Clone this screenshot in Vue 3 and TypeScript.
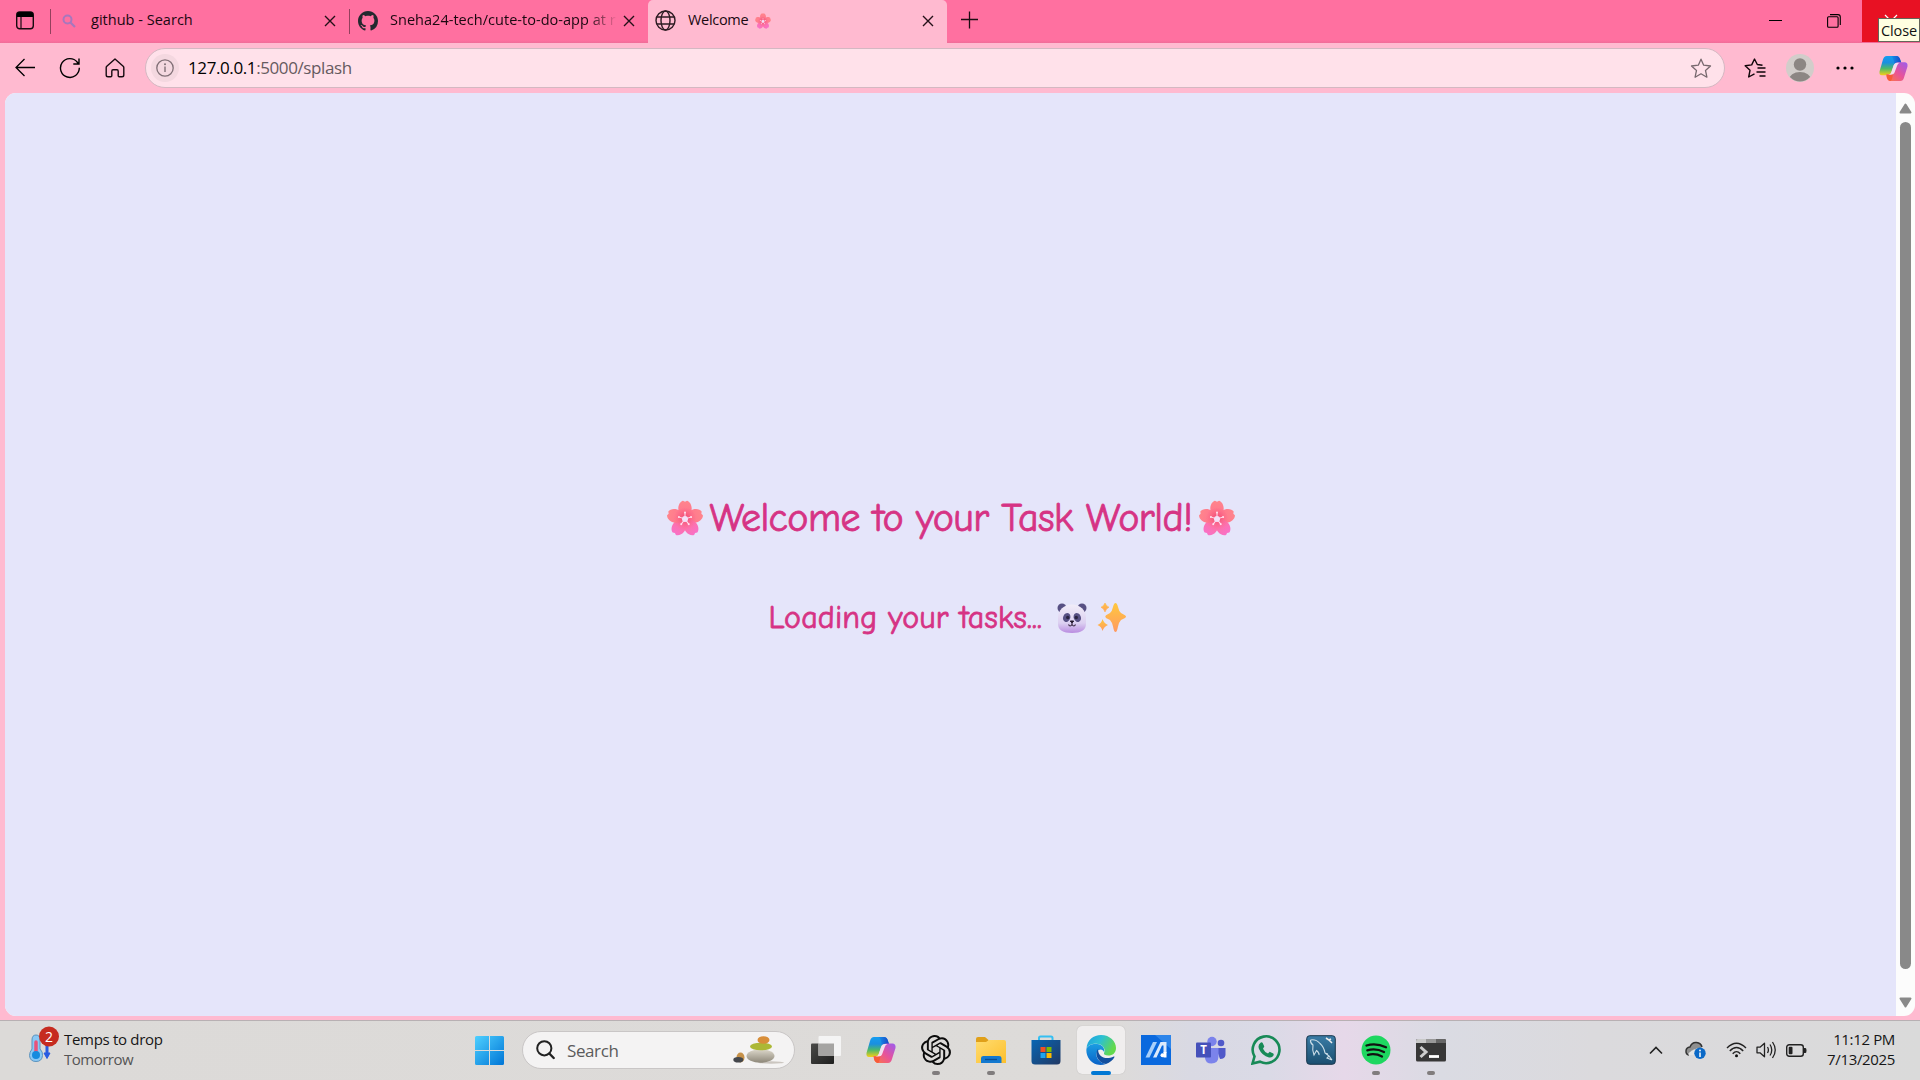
<script setup lang="ts">
interface TrayApp { name: string; running?: boolean; active?: boolean }

const apps: TrayApp[] = [
  { name: 'taskview' },
  { name: 'copilot' },
  { name: 'chatgpt', running: true },
  { name: 'explorer', running: true },
  { name: 'store' },
  { name: 'edge', active: true },
  { name: 'myasus' },
  { name: 'teams' },
  { name: 'whatsapp' },
  { name: 'mysql' },
  { name: 'spotify', running: true },
  { name: 'terminal', running: true },
]
const petals = [0, 72, 144, 216, 288]
</script>

<template>
  <div class="desktop">
    <svg class="defs" width="0" height="0" aria-hidden="true">
      <defs>
        <linearGradient id="petal" x1="0" y1="0" x2="0" y2="1">
          <stop offset="0" stop-color="#ff858c" /><stop offset="1" stop-color="#ff6f90" />
        </linearGradient>
        <linearGradient id="petalLow" x1="0" y1="1" x2="0" y2="0">
          <stop offset="0" stop-color="#ff7392" /><stop offset="1" stop-color="#f970c8" />
        </linearGradient>
        <radialGradient id="petalCore" cx="18" cy="18" r="12" gradientUnits="userSpaceOnUse">
          <stop offset="0" stop-color="#ee4570" /><stop offset="1" stop-color="#ff6c8c" stop-opacity="0" />
        </radialGradient>
        <linearGradient id="cpA" x1="0" y1="0" x2="0" y2="1">
          <stop offset="0" stop-color="#159df0" /><stop offset=".35" stop-color="#1a8fe0" /><stop offset=".65" stop-color="#4cb96a" /><stop offset="1" stop-color="#f6cf17" />
        </linearGradient>
        <linearGradient id="cpB" x1="1" y1="0" x2="0" y2="1">
          <stop offset="0" stop-color="#9a5cf0" /><stop offset=".5" stop-color="#e7529b" /><stop offset="1" stop-color="#ff7a3d" />
        </linearGradient>
        <linearGradient id="cpC" x1="0" y1="0" x2="1" y2="0">
          <stop offset="0" stop-color="#1597ee" /><stop offset="1" stop-color="#1a45c4" />
        </linearGradient>
        <linearGradient id="win" x1="0" y1="0" x2="1" y2="1">
          <stop offset="0" stop-color="#4ed0ff" /><stop offset="1" stop-color="#0075d6" />
        </linearGradient>
        <linearGradient id="edgeTop" x1="0" y1="0" x2="1" y2=".4">
          <stop offset="0" stop-color="#1d9fe0" /><stop offset=".5" stop-color="#2cc0d3" /><stop offset="1" stop-color="#63d94c" />
        </linearGradient>
        <linearGradient id="edgeBlue" x1="0" y1="0" x2="0" y2="1">
          <stop offset="0" stop-color="#1b9de2" /><stop offset="1" stop-color="#0a62c8" />
        </linearGradient>
        <linearGradient id="gold" x1="0" y1="0" x2="0" y2="1">
          <stop offset="0" stop-color="#ffc83d" /><stop offset="1" stop-color="#ff9a62" />
        </linearGradient>
        <linearGradient id="panda" x1="0" y1="0" x2="0" y2="1">
          <stop offset="0" stop-color="#f1edf8" /><stop offset=".65" stop-color="#dcd0f1" /><stop offset="1" stop-color="#b98be0" />
        </linearGradient>
        <linearGradient id="folder" x1="0" y1="0" x2="1" y2="1">
          <stop offset="0" stop-color="#ffdc70" /><stop offset="1" stop-color="#fdbf2c" />
        </linearGradient>
        <linearGradient id="bag" x1="0" y1="0" x2="1" y2="1">
          <stop offset="0" stop-color="#0766b4" /><stop offset="1" stop-color="#223964" />
        </linearGradient>
        <linearGradient id="sea" x1="0" y1="0" x2="0" y2="1">
          <stop offset="0" stop-color="#3a7ca6" /><stop offset="1" stop-color="#1b4f70" />
        </linearGradient>
        <linearGradient id="stone" x1="0" y1="0" x2="0" y2="1">
          <stop offset="0" stop-color="#ddd8cb" /><stop offset="1" stop-color="#8d8779" />
        </linearGradient>
        <linearGradient id="dark" x1="0" y1="0" x2="1" y2="1">
          <stop offset="0" stop-color="#4a4a48" /><stop offset="1" stop-color="#1f1f1e" />
        </linearGradient>
        <symbol id="blossom" viewBox="0 0 36 36">
          <path v-for="a in petals" :key="a" :transform="`rotate(${a} 18 19)`" :fill="a === 144 || a === 216 ? 'url(#petalLow)' : 'url(#petal)'"
            d="M18 20C13.500 17 11.300 12.500 11.300 8.500C11.300 4.500 13.500 1.500 16 .8L18 1.800L20 .8C22.500 1.500 24.700 4.500 24.700 8.500C24.700 12.500 22.500 17 18 20Z" />
          <circle cx="18" cy="19" r="11" fill="url(#petalCore)" />
          <g v-for="a in petals" :key="`s${a}`" :transform="`rotate(${a} 18 19)`">
            <path d="M18 19V13" stroke="#ffe2f2" stroke-width="1" /><circle cx="18" cy="12.600" r="1" fill="#ffe2f2" />
          </g>
          <circle cx="18" cy="19" r="3" fill="#f3e0f8" />
        </symbol>
        <symbol id="copilot" viewBox="0 0 30 28">
          <path d="M8 1H18Q21 1 22 5L23 8H19Q16 8 15 11L12.500 19Q12 21 9 21H3Q0 21 .5 17L4 5Q5 1 8 1Z" fill="url(#cpA)" />
          <path d="M12 1H18Q21 1 22 5L23 8H19Q16.500 8 15.700 9Q15 2 12 1Z" fill="url(#cpC)" />
          <path d="M22 27H12Q9 27 8 23L7.300 20H11Q13.500 20 14.500 17L17 9Q17.600 7.500 20 7.500H27Q30 8 29.500 12L26 23Q25 27 22 27Z" fill="url(#cpB)" />
          <path d="M8 20.500H11Q13.500 20 14.500 17L15 15.500Q14 26 12 27Q9 26.500 8 23Z" fill="#f75b39" />
          <path d="M15.200 11Q16 8 19 8H21.500Q19.500 8.500 18.800 11L16.200 18Q15.500 20.500 12 20.500H9.500Q12 20.300 12.700 18Z" fill="#f3dff0" />
        </symbol>
        <symbol id="close" viewBox="0 0 12 12"><path d="M1 1L11 11M11 1L1 11" fill="none" stroke="#241018" stroke-width="1.400" /></symbol>
      </defs>
    </svg>

    <header class="tabs">
      <div class="workspace">
        <svg width="18" height="19" viewBox="0 0 18 19"><rect x=".7" y="1" width="16.600" height="16.800" rx="3" fill="none" stroke="#170a0f" stroke-width="1.400" /><path d="M1 6V3Q1 1 4 1H14Q17 1 17 3V6Z" fill="#000" /><path d="M5 6V18" stroke="#170a0f" stroke-width="1.200" /></svg>
      </div>
      <div class="tab first">
        <svg class="lens" width="14" height="14" viewBox="0 0 14 14"><circle cx="5.500" cy="5.500" r="4" fill="none" stroke="#a777bd" stroke-width="2" /><path d="M8.500 8.500L13 13" stroke="#a777bd" stroke-width="2.200" /></svg>
        <span class="label t1">github - Search</span>
        <svg class="x" width="12" height="12"><use href="#close" /></svg>
      </div>
      <div class="tab second">
        <svg width="20" height="20" viewBox="0 0 16 16"><path fill="#24292f" d="M8 0C3.580 0 0 3.580 0 8c0 3.540 2.290 6.530 5.470 7.590.4.070.55-.17.55-.38 0-.19-.01-.82-.01-1.490-2.010.37-2.530-.49-2.690-.94-.09-.23-.48-.94-.82-1.130-.28-.15-.68-.52-.01-.53.63-.01 1.080.58 1.230.82.72 1.210 1.870.87 2.330.66.07-.52.28-.87.51-1.070-1.780-.2-3.640-.89-3.640-3.950 0-.87.31-1.590.82-2.150-.08-.2-.36-1.020.08-2.120 0 0 .67-.21 2.200.82.64-.18 1.320-.27 2-.27s1.360.09 2 .27c1.530-1.040 2.200-.82 2.200-.82.44 1.100.16 1.920.08 2.120.51.56.82 1.270.82 2.150 0 3.070-1.870 3.750-3.650 3.950.29.25.54.73.54 1.480 0 1.070-.01 1.930-.01 2.200 0 .21.15.46.55.38A8.010 8.010 0 0 0 16 8c0-4.420-3.580-8-8-8Z" /></svg>
        <span class="label t2">Sneha24-tech/cute-to-do-app at r</span>
        <svg class="x" width="12" height="12"><use href="#close" /></svg>
      </div>
      <div class="tab current">
        <svg width="21" height="21" viewBox="0 0 21 21" fill="none" stroke="#2c1b22" stroke-width="1.400"><circle cx="10.500" cy="10.500" r="9.500" /><ellipse cx="10.500" cy="10.500" rx="4.500" ry="9.500" /><path d="M1.800 7H19.200M1.800 14H19.200" /></svg>
        <span class="label t3">Welcome</span>
        <svg class="mini" width="16" height="16"><use href="#blossom" /></svg>
        <svg class="x" width="12" height="12"><use href="#close" /></svg>
      </div>
      <svg class="plus" width="18" height="18" viewBox="0 0 18 18"><path d="M8.500 .5V17.500M0 8.500H17" stroke="#1c0c12" stroke-width="1.300" /></svg>
      <div class="window-buttons">
        <svg width="14" height="14" viewBox="0 0 14 14"><path d="M0 6.500H13" stroke="#000" /></svg>
        <svg width="14" height="14" viewBox="0 0 14 14" fill="none" stroke="#000" stroke-width="1.100"><rect x=".6" y="2.800" width="10.500" height="10.500" rx="1" /><path d="M3 .6H11Q13.300 .6 13.300 3V11" /></svg>
        <div class="closer">
          <svg width="14" height="14" viewBox="0 0 14 14"><path d="M1 1L13 13M13 1L1 13" stroke="#fff" stroke-width="1.200" /></svg>
          <span class="tooltip">Close</span>
        </div>
      </div>
    </header>

    <nav class="toolbar">
      <svg class="back" width="21" height="20" viewBox="0 0 21 20"><path d="M21 9.500H2M10.500 1L2 9.500L10.500 18" fill="none" stroke="#000" stroke-width="1.300" /></svg>
      <svg class="reload" width="22" height="22" viewBox="0 0 22 22" fill="none" stroke="#000" stroke-width="1.400"><path d="M20.300 10.800A9.400 9.400 0 1 1 18.300 5.200L19.700 7M20 1.500V7H14.300" /></svg>
      <svg class="home" width="20" height="20" viewBox="0 0 20 20" fill="none" stroke="#170b10" stroke-width="1.400"><path d="M10 1L1.800 8.200Q1.200 8.800 1.200 9.500V17Q1.200 18.800 3 18.800H5.800Q6.800 18.800 6.800 17.800V13.200Q6.800 11.800 8 11.800H12Q13.200 11.800 13.200 13.200V17.800Q13.200 18.800 14.200 18.800H17Q18.800 18.800 18.800 17V9.500Q18.800 8.800 18.200 8.200Z" stroke-linejoin="round" /></svg>
      <div class="address">
        <span class="info"><svg width="18" height="18" viewBox="0 0 18 18"><circle cx="9" cy="9" r="8.200" fill="none" stroke="#806f76" stroke-width="1.300" /><path d="M9 7.500V13" stroke="#806f76" stroke-width="1.400" /><circle cx="9" cy="5.200" r="1" fill="#806f76" /></svg></span>
        <span class="url"><b>127.0.0.1</b>:5000/splash</span>
        <svg class="star" width="22" height="21" viewBox="0 0 22 21"><path d="M11 1.200L13.700 7.200L20.500 8L15.500 12.400L16.900 19.200L11 15.800L5.100 19.200L6.500 12.400L1.500 8L8.300 7.200Z" fill="none" stroke="#77686e" stroke-width="1.300" stroke-linejoin="round" /></svg>
      </div>
      <svg class="favs" width="22" height="21" viewBox="0 0 22 21" fill="none" stroke="#100509" stroke-width="1.400" stroke-linejoin="round"><path d="M18.500 7.800L13.300 7L10.500 1.500L7.700 7.400L1.200 8.300L6 12.800L4.700 19.500L10.500 16.300M13.500 10.500H21.500M12.500 14.500H21.500M15.500 18.500H21.500" transform="translate(0 -.5)" /></svg>
      <svg class="avatar" width="28" height="28" viewBox="0 0 28 28"><clipPath id="face"><circle cx="14" cy="14" r="13.500" /></clipPath><circle cx="14" cy="14" r="14" fill="#d2cdca" /><g clip-path="url(#face)" fill="#8c8683"><circle cx="14" cy="10.500" r="6.200" /><ellipse cx="14" cy="26" rx="11" ry="8" /></g></svg>
      <svg class="dots" width="18" height="4" viewBox="0 0 18 4"><circle cx="2" cy="2" r="1.600" /><circle cx="9" cy="2" r="1.600" /><circle cx="16" cy="2" r="1.600" /></svg>
      <svg class="cp" width="29" height="27"><use href="#copilot" /></svg>
    </nav>

    <section class="frame">
      <main class="page">
        <h1><svg width="36" height="36"><use href="#blossom" /></svg><span>Welcome to your Task World!</span><svg width="36" height="36"><use href="#blossom" /></svg></h1>
        <p>
          <span>Loading your tasks...</span>
          <svg class="bear" width="30" height="32" viewBox="0 0 30 32">
            <circle cx="5" cy="6" r="4.500" fill="#575083" /><circle cx="25" cy="6" r="4.500" fill="#575083" />
            <path d="M15 2.500C23 2.500 29 8 29 16V22C29 28 24 31 15 31S1 28 1 22V16C1 8 7 2.500 15 2.500Z" fill="url(#panda)" />
            <ellipse cx="9.700" cy="15.500" rx="3.600" ry="4.600" fill="#575083" transform="rotate(22 9.700 15.500)" /><ellipse cx="20.300" cy="15.500" rx="3.600" ry="4.600" fill="#575083" transform="rotate(-22 20.300 15.500)" />
            <circle cx="10.700" cy="15.500" r="1.700" fill="#2a2340" /><circle cx="19.300" cy="15.500" r="1.700" fill="#2a2340" />
            <path d="M13.300 19H16.700L15 21Z" fill="#21162a" stroke="#21162a" /><path d="M11.500 22.500Q13 25.500 15 22.500Q17 25.500 18.500 22.500M15 20V23" fill="none" stroke="#382841" stroke-width="1.200" />
          </svg>
          <svg class="spark" width="30" height="31" viewBox="0 0 30 31" fill="url(#gold)">
            <path d="M18.500 1Q20 1 21 5Q22 9.500 24 11L28 13.200Q30 14.500 28 16L24 18Q22 20 21 24.500Q20 30 18.500 30Q17 30 16 24.500Q15 20 13 18L9 16Q7.500 14.500 9 13.200L13 11Q15 9.500 16 5Q17 1 18.500 1Z" />
            <path d="M8 1Q9 4 12 5.200Q9 6.500 8 10Q7 6.500 4 5.200Q7 4 8 1Z" stroke="#ffb04f" stroke-width=".6" /><path d="M5.500 17Q7 21.500 11 23Q7 24.500 5.500 29Q4.500 24.500 .5 23Q4.500 21.500 5.500 17Z" />
          </svg>
        </p>
      </main>
      <aside class="scroll">
        <svg width="13" height="11" viewBox="0 0 13 11"><path d="M6.500 1.500L11.500 9.500H1.500Z" fill="#898989" stroke="#898989" stroke-width="2" stroke-linejoin="round" /></svg>
        <div class="thumb"></div>
        <svg width="13" height="11" viewBox="0 0 13 11"><path d="M6.500 9.500L11.500 1.500H1.500Z" fill="#898989" stroke="#898989" stroke-width="2" stroke-linejoin="round" /></svg>
      </aside>
    </section>

    <footer class="taskbar">
      <div class="weather">
        <svg width="32" height="38" viewBox="0 0 32 38"><path d="M4 14Q4 9 8 9Q12 9 12 14V23Q15 26 14.500 29.500Q14 35.500 8 35.500Q2 35.500 1.500 29.500Q1.500 26 4 23Z" fill="#8ac8f5" stroke="#5c93bd" /><path d="M8 16V29" stroke="#e95279" stroke-width="3.500" stroke-linecap="round" /><circle cx="8" cy="29" r="4" fill="#168bdf" /><path d="M19 19V30" stroke="#285be1" stroke-width="3" /><path d="M16 27H22L19 32.500Z" fill="#285be1" stroke="#285be1" /><circle cx="21" cy="10.500" r="10" fill="#c62b20" /><text x="21" y="15.500" text-anchor="middle" fill="#fff" font-family="Open Sans" font-size="14">2</text></svg>
        <div class="lines"><span class="w1">Temps to drop</span><span class="w2">Tomorrow</span></div>
      </div>
      <div class="dock">
        <svg class="start" width="29" height="29" viewBox="0 0 29 29"><path d="M1.500 0H14V14H0V1.500Q0 0 1.500 0ZM15 0H27.500Q29 0 29 1.500V14H15ZM0 15H14V29H1.500Q0 29 0 27.500ZM15 15H29V27.500Q29 29 27.500 29H15Z" fill="url(#win)" /></svg>
        <div class="search">
          <svg width="19" height="20" viewBox="0 0 19 20"><circle cx="8.300" cy="8.300" r="7.100" fill="none" stroke="#222" stroke-width="2" /><path d="M13.300 13.500L17.700 18" stroke="#222" stroke-width="2.400" stroke-linecap="round" /></svg>
          <span>Search</span>
          <svg class="stones" width="52" height="30" viewBox="0 0 52 30"><ellipse cx="38" cy="27.500" rx="13" ry="1.200" fill="#cbc6c0" /><ellipse cx="7.500" cy="22.500" rx="4" ry="5" fill="#c69149" /><ellipse cx="5.300" cy="24.700" rx="5" ry="2.800" fill="#44474c" /><ellipse cx="27.500" cy="21" rx="14" ry="6.800" fill="url(#stone)" /><ellipse cx="28" cy="11.500" rx="11" ry="3.800" fill="#acb835" /><ellipse cx="30.500" cy="5" rx="6" ry="3.800" fill="#d88e3a" /></svg>
        </div>
        <div class="apps">
          <div v-for="app in apps" :key="app.name" class="app" :class="{ active: app.active, running: app.running }">
            <svg v-if="app.name === 'taskview'" width="30" height="30" viewBox="0 0 30 30"><rect x="0" y="8.500" width="23" height="20.500" rx="1" fill="url(#dark)" /><rect x="7.500" y="1" width="22.500" height="20" rx="1" fill="#f4f4f4" /><rect x="7.500" y="8.500" width="15.500" height="12.500" fill="#a5a4a2" /></svg>
            <svg v-else-if="app.name === 'copilot'" width="30" height="28"><use href="#copilot" /></svg>
            <svg v-else-if="app.name === 'chatgpt'" width="30" height="30" viewBox="0 0 24 24"><path fill="#0c0c0c" d="M22.2819 9.8211a5.9847 5.9847 0 0 0-.5157-4.9108 6.0462 6.0462 0 0 0-6.5098-2.9A6.0651 6.0651 0 0 0 4.9807 4.1818a5.9847 5.9847 0 0 0-3.9977 2.9 6.0462 6.0462 0 0 0 .7427 7.0966 5.98 5.98 0 0 0 .511 4.9107 6.051 6.051 0 0 0 6.5146 2.9001A5.9847 5.9847 0 0 0 13.2599 24a6.0557 6.0557 0 0 0 5.7718-4.2058 5.9894 5.9894 0 0 0 3.9977-2.9001 6.0557 6.0557 0 0 0-.7475-7.0729zm-9.022 12.6081a4.4755 4.4755 0 0 1-2.8764-1.0408l.1419-.0804 4.7783-2.7582a.7948.7948 0 0 0 .3927-.6813v-6.7369l2.02 1.1686a.071.071 0 0 1 .038.052v5.5826a4.504 4.504 0 0 1-4.4945 4.4944zm-9.6607-4.1254a4.4708 4.4708 0 0 1-.5346-3.0137l.142.0852 4.783 2.7582a.7712.7712 0 0 0 .7806 0l5.8428-3.3685v2.3324a.0804.0804 0 0 1-.0332.0615L9.74 19.9502a4.4992 4.4992 0 0 1-6.1408-1.6464zM2.3408 7.8956a4.485 4.485 0 0 1 2.3655-1.9728V11.6a.7664.7664 0 0 0 .3879.6765l5.8144 3.3543-2.0201 1.1685a.0757.0757 0 0 1-.071 0l-4.8303-2.7865A4.504 4.504 0 0 1 2.3408 7.872zm16.5963 3.8558L13.1038 8.364 15.1192 7.2a.0757.0757 0 0 1 .071 0l4.8303 2.7913a4.4944 4.4944 0 0 1-.6765 8.1042v-5.6772a.79.79 0 0 0-.407-.667zm2.0107-3.0231l-.142-.0852-4.7735-2.7818a.7759.7759 0 0 0-.7854 0L9.409 9.2297V6.8974a.0662.0662 0 0 1 .0284-.0615l4.8303-2.7866a4.4992 4.4992 0 0 1 6.6802 4.66zM8.3065 12.863l-2.02-1.1638a.0804.0804 0 0 1-.038-.0567V6.0742a4.4992 4.4992 0 0 1 7.3757-3.4537l-.142.0805L8.704 5.459a.7948.7948 0 0 0-.3927.6813zm1.0976-2.3654l2.602-1.4998 2.6069 1.4998v2.9994l-2.5974 1.4997-2.6067-1.4997Z" /></svg>
            <svg v-else-if="app.name === 'explorer'" width="30" height="28" viewBox="0 0 30 28"><path d="M0 3Q0 1 2 1H9L12.500 4V10H0Z" fill="#e0a019" /><path d="M0 6H10L13 4H28Q30 4 30 6V27H0Z" fill="url(#folder)" /><path d="M5 27V22Q5 20 7.500 20H23Q25.500 20 25.500 22V27Z" fill="#1479cf" /><path d="M9 23.500H21" stroke="#0a4e93" stroke-width="1.300" /></svg>
            <svg v-else-if="app.name === 'store'" width="30" height="30" viewBox="0 0 30 30"><path d="M8 6V3Q8 1.500 9.500 1.500H20Q21.500 1.500 21.500 3V6" fill="none" stroke="#35bff2" stroke-width="2" /><path d="M.5 5H29.500V26Q29.500 29.500 26 29.500H4Q.5 29.500 .5 26Z" fill="url(#bag)" /><path d="M9.500 12H14.500V17H9.500Z" fill="#f25022" /><path d="M15.500 12H20.500V17H15.500Z" fill="#7fba00" /><path d="M9.500 18H14.500V23H9.500Z" fill="#1ea4ee" /><path d="M15.500 18H20.500V23H15.500Z" fill="#ffb901" /></svg>
            <svg v-else-if="app.name === 'edge'" width="30" height="30" viewBox="0 0 30 30"><path d="M.5 13.500C1 5 7.500 0 15 0C24 0 30 6.500 30 13C30 18 26.500 20.500 22.500 20.500C19 20.500 17.500 19.500 18 18C19.500 15.500 18.500 10 12 9C6.500 8.200 2 10.500 .5 13.500Z" fill="url(#edgeTop)" /><path d="M.5 13.500C2.500 9.500 7 8.500 11 9C17 9.500 19 14 18 17C17 14 13 13.500 11 17C9 22 13 27.500 20 29C17 30 14 30.300 11 29.500C4 27.500 -.5 20.500 .5 13.500Z" fill="url(#edgeBlue)" /><path d="M12 14C8.500 18 11 28 20 29C24 27.500 27 25 28.500 22Q28.700 21.200 27.800 21.500C20 25 12 22.500 12 14Z" fill="#124f9f" /></svg>
            <svg v-else-if="app.name === 'myasus'" width="30" height="30" viewBox="0 0 30 30"><path d="M0 0H30V30H0Z" fill="#0a69de" /><path d="M14 0H30V14Z" fill="#3c91f0" opacity=".7" /><path d="M4.500 22.500L12 7H16L8.500 22.500Z" fill="#a9d0fa" /><path d="M12 22.500L19.500 7H25.500V18H22.500V10.500H21L15.500 22.500Z" fill="#dceafb" /><circle cx="21.500" cy="20.300" r="2" fill="#fff" /><path d="M22.500 17H25.500V22.500H22.500Z" fill="#fff" /></svg>
            <svg v-else-if="app.name === 'teams'" width="30" height="28" viewBox="0 0 30 28"><circle cx="25" cy="7" r="3.300" fill="#5059c9" /><path d="M20 12H29.500V19Q29 23 24 23Z" fill="#5059c9" /><circle cx="16" cy="5.500" r="4.700" fill="#7b83eb" /><path d="M9 12H22.500V21Q22 27.500 15.500 27.500Q9.500 27.500 9 22Z" fill="#7b83eb" /><rect x="0" y="6.500" width="15" height="15" rx="1" fill="#4550ba" /><text x="7.500" y="18" text-anchor="middle" fill="#fff" font-family="Open Sans" font-weight="700" font-size="11.500">T</text></svg>
            <svg v-else-if="app.name === 'whatsapp'" width="30" height="30" viewBox="0 0 30 30"><path d="M1.500 28.500L3.500 21.500A13.400 13.400 0 1 1 9 26.700Z" fill="none" stroke="#178a57" stroke-width="2.600" /><path d="M9.500 7.800Q10.800 6.800 11.700 8L13.300 11.500L12 13.700Q13.500 17 17 18.500L18.700 16.800L22.300 18.500Q23 19 22.500 20.500Q21 23 18 22.400Q11 20.800 8 14Q6.500 10 9.500 7.800Z" fill="#178a57" /></svg>
            <svg v-else-if="app.name === 'mysql'" width="30" height="30" viewBox="0 0 30 30"><rect x=".7" y=".7" width="28.600" height="28.600" rx="3" fill="url(#sea)" stroke="#17364c" /><path d="M4.500 5Q10 4 14 8.500Q18 12 19 18L23 21L26 25M4.500 5Q4 8 7 10Q6 15 8 20L10.500 15.500Q13.500 18 13 20M19 18L22 19M23 21L21 23L26 25" fill="none" stroke="#cbdde7" stroke-width="1.100" /><path d="M20 3L23 5L26 8M23 5L25 4" stroke="#eee" stroke-width="1.600" fill="none" /></svg>
            <svg v-else-if="app.name === 'spotify'" width="30" height="30" viewBox="0 0 30 30"><circle cx="15" cy="15" r="14.500" fill="#1ed760" /><path d="M5.500 10.500Q15 7.500 25 12.300M6.300 15.300Q15 13 23 17M7 19.800Q14.500 18 21 21.500" fill="none" stroke="#111" stroke-width="2.300" stroke-linecap="round" /></svg>
            <svg v-else width="30" height="23" viewBox="0 0 30 23"><rect width="30" height="22.500" rx="1.500" fill="#373737" /><path d="M0 4V1.500Q0 0 1.500 0H10V4Z" fill="#c9c9c9" /><path d="M10 0H20V4H10Z" fill="#999" /><path d="M20 0H28.500Q30 0 30 1.500V4H20Z" fill="#666" /><path d="M4.500 8L10 13L4.500 18" fill="none" stroke="#ccc" stroke-width="3" /><path d="M13 17.500H23" stroke="#fff" stroke-width="2.800" /></svg>
          </div>
        </div>
      </div>
      <div class="tray">
        <svg class="up" width="14" height="9" viewBox="0 0 14 9"><path d="M1 7.500L7 1.500L13 7.500" fill="none" stroke="#222" stroke-width="1.600" /></svg>
        <svg class="cloud" width="21" height="18" viewBox="0 0 21 18"><path d="M4 14Q.8 13.500 1 10Q1.200 6.500 5 6Q7 1 11.500 1.500Q16 2 17 6" fill="#8f8f8f" stroke="#333" stroke-width="1.500" /><path d="M3 13Q6 9 13 7L17 11V14H4Z" fill="#e4e4e4" /><circle cx="15" cy="12.300" r="5.700" fill="#0b69c7" /><path d="M15 11.500V16" stroke="#fff" stroke-width="1.500" /><circle cx="15" cy="9.500" r=".9" fill="#fff" /></svg>
        <svg class="wifi" width="21" height="16" viewBox="0 0 21 16" fill="none" stroke="#222" stroke-width="1.400"><path d="M1 6Q10.500 -3.500 20 6M3.800 9Q10.500 2 17.200 9M6.700 11.700Q10.500 7.500 14.300 11.700" /><circle cx="10.500" cy="13.800" r="1.500" fill="#111" stroke="none" /></svg>
        <svg class="vol" width="21" height="18" viewBox="0 0 21 18" fill="none" stroke="#222" stroke-width="1.300"><path d="M1 6.200H4L8.500 2.200V15.800L4 11.800H1Z" stroke-linejoin="round" /><path d="M11.500 6Q13.300 9 11.500 12M14 3.500Q17.500 9 14 14.500M16.500 1Q22 9 16.500 17" /></svg>
        <svg class="bat" width="21" height="13" viewBox="0 0 21 13"><rect x=".7" y=".7" width="16.600" height="11.600" rx="2.500" fill="none" stroke="#222" stroke-width="1.400" /><rect x="2.700" y="2.800" width="3.800" height="7.400" rx="1" fill="#222" /><path d="M17.500 4H19.500Q20.500 4 20.500 6.500T19.500 9H17.500Z" fill="#222" /></svg>
        <div class="clock"><span class="c1">11:12 PM</span><span class="c2">7/13/2025</span></div>
      </div>
    </footer>
  </div>
</template>

<style>
body { margin: 0; overflow: hidden; }
</style>
<style scoped>
.desktop { width: 1920px; height: 1080px; display: flex; flex-direction: column; background: #ffbad0; font-family: "Segoe UI", "Open Sans", "Noto Sans", sans-serif; font-size: 15px; overflow: hidden; }
.defs { position: absolute; }
svg { flex: none; display: block; }
span { white-space: nowrap; }
.tabs { height: 43px; box-sizing: border-box; display: flex; background: linear-gradient(#ff70a0 0 40px, #f06c98 43px); color: #1a0810; flex: none; }
.workspace { width: 50px; height: 41px; padding-left: 16px; box-sizing: border-box; display: flex; align-items: center; }
.tab { display: flex; align-items: center; height: 41px; box-sizing: border-box; }
.first, .second { background: linear-gradient(#93405d, #93405d) 0 9px / 1px 25px no-repeat; }
.first { width: 299px; padding-left: 12px; }
.second { width: 299px; padding-left: 9px; }
.lens { margin-right: 15px; }
.x { margin-left: auto; }
.first .x { margin-right: 13px; }
.second .x { margin-right: 13px; }
.label { font-size: 14.500px; line-height: 20px; padding-bottom: 1px; }
.t1 { letter-spacing: .02px; }
.t2 { margin-left: 12px; padding-right: 4px; letter-spacing: .03px; mask-image: linear-gradient(90deg, #000 86%, transparent 99%); }
.current { width: 299px; height: 43px; padding: 0 13px 2px 7px; background: #ffbad0; border-radius: 5px 5px 0 0; }
.t3 { margin-left: 12px; letter-spacing: -.3px; }
.mini { margin-left: 7px; }
.plus { margin: 11px 0 0 14px; }
.window-buttons { margin-left: auto; display: flex; align-items: center; height: 42px; }
.window-buttons > svg { margin-right: 44px; }
.window-buttons > svg + svg { margin-right: 21px; margin-left: 0; }
.closer { width: 58px; height: 42px; background: #e81123; position: relative; display: flex; align-items: center; justify-content: center; }
.tooltip { position: absolute; left: 16px; top: 18px; width: 42px; height: 24px; box-sizing: border-box; border: 1px solid #656559; background: #ffffe1; color: #111; line-height: 23px; font-size: 14.500px; padding-left: 2px; letter-spacing: -.1px; }
.toolbar { height: 50px; flex: none; display: flex; align-items: center; }
.back { margin-left: 14px; }
.reload { margin-left: 24px; }
.home { margin-left: 24px; }
.address { margin-left: 20px; width: 1580px; height: 40px; box-sizing: border-box; border: 1px solid #d4b8c2; border-radius: 20px; background: #ffe1ea; display: flex; align-items: center; padding: 0 12px 0 5px; }
.info { width: 28px; height: 28px; margin-right: 9px; border-radius: 50%; background: #f4d8e0; display: flex; align-items: center; justify-content: center; }
.url { color: #665a5f; font-size: 17px; letter-spacing: -.4px; padding-bottom: 2px; }
.url b { font-weight: 400; color: #000; }
.star { margin-left: auto; }
.favs { margin-left: 19px; }
.avatar { margin-left: 20px; }
.dots { margin-left: 22px; }
.cp { margin-left: 25px; }
.frame { height: 923px; margin: 0 5px 4px; flex: none; display: flex; border-radius: 11px; overflow: hidden; background: #fcfcfc; }
.page { width: 1891px; background: #e5e5fa; display: flex; flex-direction: column; align-items: center; color: #d63384; font-family: "Comic Sans MS", "Comic Neue", "Noto Sans", sans-serif; -webkit-text-stroke: .8px #d63384; }
h1 { font-weight: 400; font-size: 40px; height: 56px; margin: 397px 0 0; display: flex; align-items: center; line-height: 56px; }
h1 span { width: 482px; margin: 0 7px; letter-spacing: -.55px; }
p { margin: 49px 0 0; height: 45px; width: 366px; font-size: 32px; line-height: 45px; display: flex; align-items: center; }
p span { width: 277px; letter-spacing: .15px; margin-left: 1px; }
.bear { margin-left: 11px; }
.spark { margin-left: 10px; }
.scroll { width: 19px; padding: 10px 0 8px; box-sizing: border-box; display: flex; flex-direction: column; align-items: center; }
.thumb { width: 11px; height: 847px; margin: 8px 0 auto; border-radius: 6px; background: #898989; }
.taskbar { height: 60px; box-sizing: border-box; border-top: 1px solid #b8b0b3; background: linear-gradient(90deg, #dcdad8 0, #dddbd9 58%, #d9d9e3 62%, #dadae6 66%, #e6d8e9 70%, #dadbe3 75%, #dbdadd 83%, #dadada); display: flex; flex: none; }
.weather { width: 475px; display: flex; padding: 5px 0 0 28px; box-sizing: border-box; }
.lines, .clock { display: flex; flex-direction: column; line-height: 20px; }
.lines { margin: 3px 0 0 4px; color: #161616; }
.w1 { letter-spacing: -.3px; }
.w2 { color: #555; letter-spacing: -.5px; }
.dock { display: flex; align-items: center; height: 58px; }
.search { width: 273px; height: 38px; box-sizing: border-box; margin-left: 18px; border: 1px solid #c9c6c6; border-radius: 19px; background: #f4f3f3; display: flex; align-items: center; padding: 0 9px 0 13px; color: #5b5b5b; font-size: 17px; }
.search span { margin-left: 12px; letter-spacing: -.4px; }
.stones { margin-left: auto; }
.apps { display: flex; gap: 7px; margin-left: 7px; }
.app { width: 48px; height: 48px; border-radius: 5px; display: flex; align-items: center; justify-content: center; position: relative; }
.active { background: #f0eeee; box-shadow: 0 0 1px #aaa; }
.active::after, .running::after { content: ""; position: absolute; bottom: -1px; width: 8px; height: 4px; border-radius: 2px; background: #807c7d; }
.active::after { width: 20px; background: #0078d4; }
.tray { margin-left: auto; height: 58px; display: flex; align-items: center; }
.cloud { margin-left: 22px; }
.wifi { margin-left: 20px; }
.vol { margin-left: 9px; }
.bat { margin-left: 9px; }
.clock { width: 88px; margin: 0 25px 2px 0; align-items: flex-end; color: #161616; }
.clock span { letter-spacing: -.35px; }
</style>
